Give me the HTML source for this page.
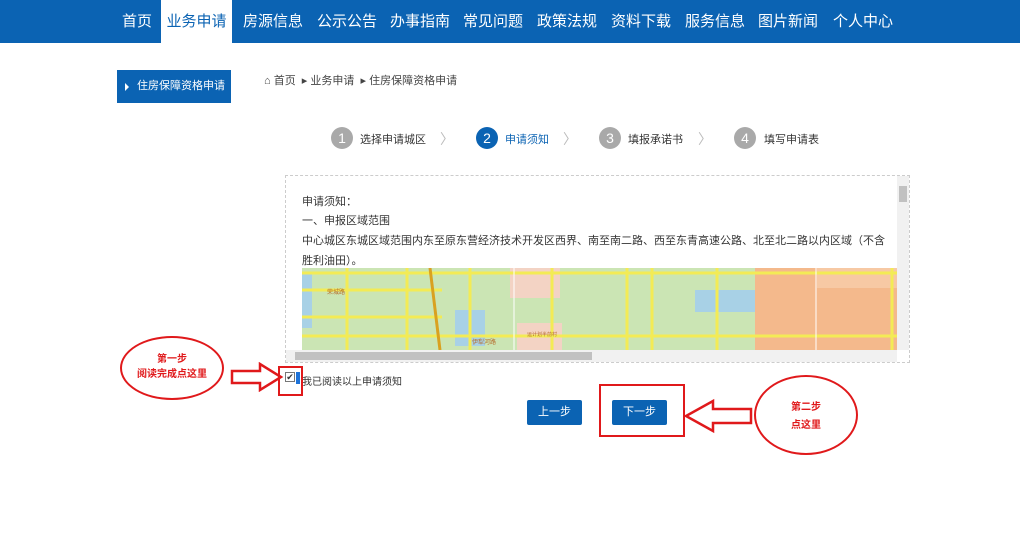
<!DOCTYPE html>
<html><head><meta charset="utf-8"><style>
*{margin:0;padding:0;box-sizing:border-box}
body{width:1020px;height:558px;background:#fff;font-family:"Liberation Sans","Noto Sans CJK SC",sans-serif;position:relative;overflow:hidden;color:#333}
.nav{position:absolute;left:0;top:0;width:1020px;height:43px;background:#0b63b3}
.nav span{position:absolute;top:0;height:43px;line-height:43px;color:#fff;font-size:15px}
.nav .act{background:#fff;color:#0b63b3;padding:0 6px;left:161px;width:71px;text-align:center;padding:0}
.abs{position:absolute}
.side{left:117px;top:70px;width:114px;height:33px;background:#0b63b3;color:#fff;font-size:11px;line-height:33px;padding-left:20px}
.side:before{content:"";position:absolute;left:8px;top:13px;border-left:4px solid #fff;border-top:4px solid transparent;border-bottom:4px solid transparent}
.crumb{left:264px;top:72px;font-size:11px;color:#444}
.circ{position:absolute;width:22px;height:22px;border-radius:50%;background:#a9a9a9;color:#fff;font-size:14px;text-align:center;line-height:22px;top:127px}
.st{position:absolute;top:131px;font-size:11px;color:#333}
.chev{position:absolute;top:129px;color:#bbb;font-size:14px}
.box{left:285px;top:175px;width:625px;height:188px;border:1px dashed #ccc}
.txt{position:absolute;left:302px;font-size:11px;color:#333}
.btn{position:absolute;top:400px;width:55px;height:25px;background:#0b63b3;color:#fff;font-size:11px;text-align:center;line-height:25px;border-radius:2px}
.red{position:absolute;border:2px solid #e0191b}
.ell{position:absolute;border:2px solid #e0191b;border-radius:50%;color:#e0191b;font-size:10px;font-weight:bold;text-align:center}
</style></head><body>
<div class="nav">
<span style="left:122px">首页</span>
<span class="act">业务申请</span>
<span style="left:243px">房源信息</span>
<span style="left:317px">公示公告</span>
<span style="left:390px">办事指南</span>
<span style="left:463px">常见问题</span>
<span style="left:537px">政策法规</span>
<span style="left:611px">资料下载</span>
<span style="left:685px">服务信息</span>
<span style="left:758px">图片新闻</span>
<span style="left:833px">个人中心</span>
</div>
<div class="abs side">住房保障资格申请</div>
<div class="abs crumb">⌂ 首页 &nbsp;▸ 业务申请 &nbsp;▸ 住房保障资格申请</div>

<div class="circ" style="left:331px">1</div><div class="st" style="left:360px">选择申请城区</div><div class="chev" style="left:440px">〉</div>
<div class="circ" style="left:476px;background:#0b63b3">2</div><div class="st" style="left:505px;color:#0b63b3">申请须知</div><div class="chev" style="left:563px">〉</div>
<div class="circ" style="left:599px">3</div><div class="st" style="left:628px">填报承诺书</div><div class="chev" style="left:698px">〉</div>
<div class="circ" style="left:734px">4</div><div class="st" style="left:764px">填写申请表</div>

<div class="abs box"></div>
<div class="txt" style="top:193px">申请须知：</div>
<div class="txt" style="top:212px">一、申报区域范围</div>
<div class="txt" style="top:232px">中心城区东城区域范围内东至原东营经济技术开发区西界、南至南二路、西至东青高速公路、北至北二路以内区域（不含</div>
<div class="txt" style="top:252px">胜利油田）。</div>
<svg class="abs" style="left:302px;top:268px" width="595" height="82">
<rect width="595" height="82" fill="#cbe5b4"/>
<rect x="208" y="0" width="50" height="30" fill="#f3d3c4"/>
<rect x="215" y="55" width="45" height="27" fill="#f3d3c4"/>
<rect x="453" y="0" width="142" height="82" fill="#f4b98c"/>
<rect x="515" y="0" width="80" height="20" fill="#f7c9a4"/>
<rect x="0" y="5" width="10" height="55" fill="#a8d1e6"/>
<rect x="153" y="42" width="30" height="36" fill="#a8d1e6"/>
<rect x="393" y="22" width="60" height="22" fill="#a8d1e6"/>
<g stroke="#f3eb55" stroke-width="3" fill="none">
<path d="M0 5H595M0 22H140M0 49H140M0 68H595M45 0V82M105 0V82M168 0V82M250 0V82M325 0V82M350 0V82M415 0V82M590 0V82"/>
</g>
<path d="M128 0L138 82" stroke="#d9a120" stroke-width="3"/>
<path d="M212 0V82M514 0V82" stroke="#fff" stroke-width="1"/>
<text x="25" y="26" font-size="6" fill="#b56b2a">荣城路</text>
<text x="170" y="76" font-size="6" fill="#b56b2a">伊犁河路</text>
<text x="225" y="68" font-size="5" fill="#b56b2a">运计划半前村</text>
</svg>
<div class="abs" style="left:897px;top:176px;width:12px;height:174px;background:#f1f1f1"></div>
<div class="abs" style="left:899px;top:186px;width:8px;height:16px;background:#c1c1c1"></div>
<div class="abs" style="left:286px;top:350px;width:611px;height:12px;background:#f1f1f1"></div>
<div class="abs" style="left:295px;top:352px;width:297px;height:8px;background:#c1c1c1"></div>

<div class="abs" style="left:285px;top:372px;width:10px;height:10px;border:1px solid #777;background:#fff;font-size:9px;line-height:8px;text-align:center">✔</div>
<div class="abs" style="left:296px;top:372px;width:4px;height:12px;background:#1e73d8"></div>
<div class="txt" style="left:302px;top:373px;font-size:10px">我已阅读以上申请须知</div>
<div class="red" style="left:278px;top:366px;width:25px;height:30px"></div>

<div class="btn" style="left:527px">上一步</div>
<div class="btn" style="left:612px">下一步</div>
<div class="red" style="left:599px;top:384px;width:86px;height:53px"></div>

<div class="ell" style="left:120px;top:336px;width:104px;height:64px;padding-top:14px;line-height:15px">第一步<br>阅读完成点这里</div>
<div class="ell" style="left:754px;top:375px;width:104px;height:80px;padding-top:22px;line-height:18px">第二步<br>点这里</div>
<svg class="abs" style="left:230px;top:362px" width="54" height="30"><path d="M2 9H30V2L51 15L30 28V21H2Z" fill="none" stroke="#e0191b" stroke-width="2.5"/></svg>
<svg class="abs" style="left:683px;top:398px" width="70" height="36"><path d="M68 11H30V3L3 18L30 33V25H68Z" fill="none" stroke="#e0191b" stroke-width="2.5"/></svg>
</body></html>
